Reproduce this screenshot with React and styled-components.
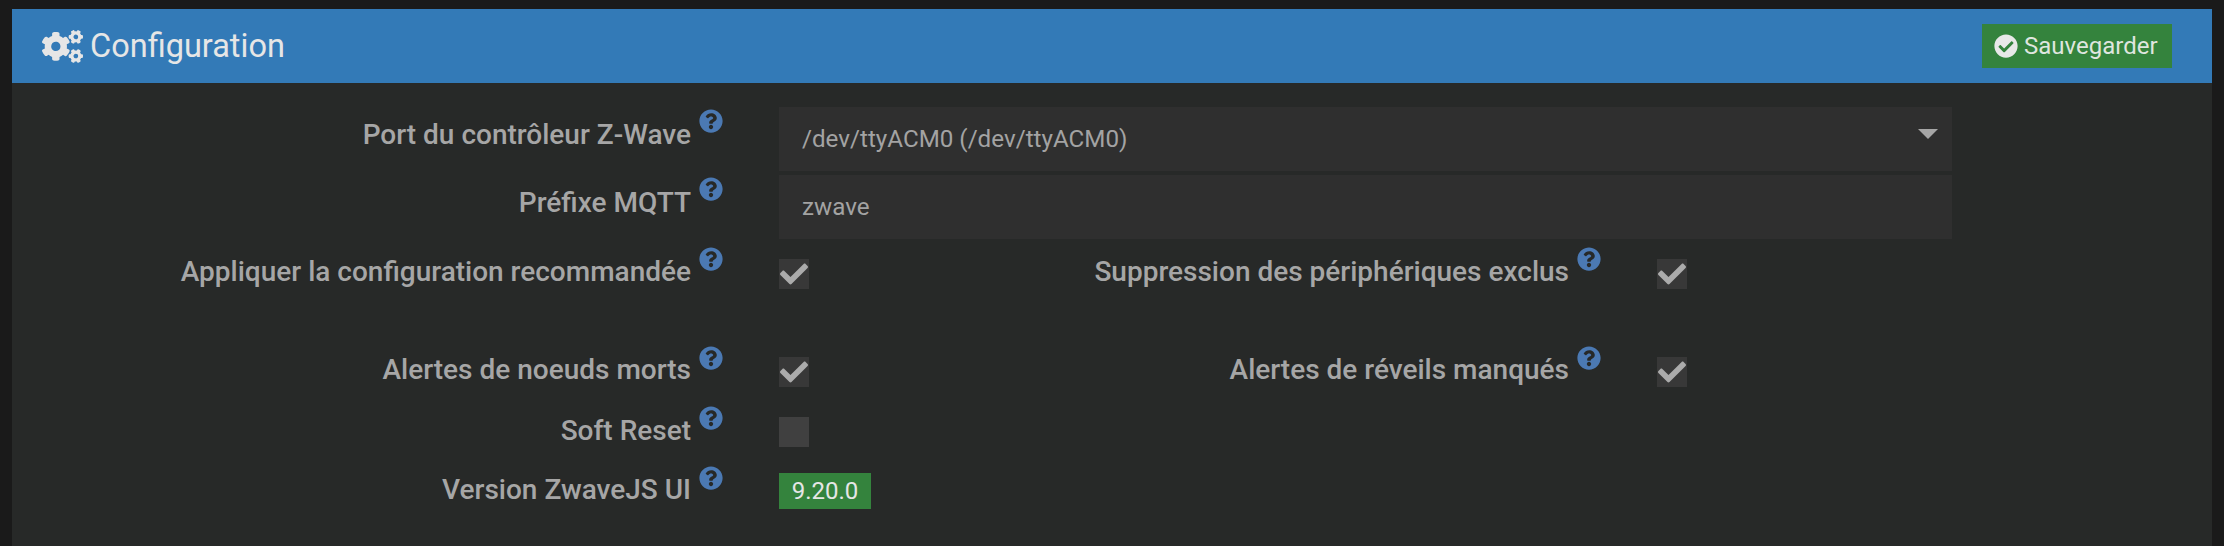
import React from 'react';
import styled, { createGlobalStyle } from 'styled-components';
import { FaCogs, FaCheckCircle, FaCheck, FaQuestionCircle } from 'react-icons/fa';

const GlobalStyle = createGlobalStyle`
  html, body {
    margin: 0;
    height: 100%;
    background: #1a1a1a;
    font-family: Roboto, "Liberation Sans", sans-serif;
  }
  * { box-sizing: border-box; }
`;

const Page = styled.div`
  height: 546px;
  padding: 9px 12px 0;
  overflow: hidden;
`;

const Panel = styled.section`
  height: 537px;
  background: #272928;
`;

const Header = styled.header`
  height: 74px;
  background: #337ab7;
  padding: 0 40px 0 30px;
  display: flex;
  align-items: center;
  justify-content: space-between;
`;

const Title = styled.h3`
  margin: 0;
  display: flex;
  align-items: center;
  gap: 7px;
  font-size: 32.5px;
  font-weight: 400;
  color: #e6e6e6;
  svg { width: 41px; height: 33px; }
`;

const SaveButton = styled.button`
  width: 190px;
  height: 44px;
  border: 0;
  padding: 0 0 0 12px;
  background: #34833d;
  color: #dfe6df;
  font: 400 24px Roboto, sans-serif;
  display: flex;
  align-items: center;
  gap: 6px;
  svg { width: 24px; height: 24px; color: #e8e8e8; }
`;

const Form = styled.div`
  padding-top: 24px;
`;

const Row = styled.div`
  display: flex;
  height: ${props => props.$height}px;
  margin-bottom: ${props => props.$gap || 0}px;
`;

const LabelBox = styled.label`
  width: ${props => props.$width}px;
  flex-shrink: 0;
  text-align: right;
  font-size: 28px;
  font-weight: 500;
  line-height: 32px;
  color: #a6a6a6;
  white-space: nowrap;
  padding-top: ${props => props.$top}px;
`;

const HelpIcon = styled(FaQuestionCircle)`
  flex-shrink: 0;
  width: 24px;
  height: 24px;
  margin: ${props => props.$top}px 56px 0 8px;
  color: #4b79b3;
`;

const TextBox = styled.div`
  width: 1173px;
  height: 64px;
  padding: 0 23px;
  background: #2f2f2f;
  color: #a3a3a3;
  font-size: 24.2px;
  display: flex;
  align-items: center;
  justify-content: space-between;
`;

const Caret = styled.span`
  width: 0;
  height: 0;
  margin: 0 -9px 10px 0;
  border-left: 10px solid transparent;
  border-right: 10px solid transparent;
  border-top: 10px solid #a6a6a6;
`;

const Checkbox = styled.span`
  width: 30px;
  height: 30px;
  margin-top: ${props => props.$top}px;
  flex-shrink: 0;
  background: ${props => (props.$checked ? '#383838' : '#404040')};
  color: #ababab;
  display: flex;
  align-items: center;
  justify-content: center;
  svg { width: 28px; height: 28px; }
`;

const Badge = styled.span`
  width: 92px;
  height: 36px;
  margin-top: ${props => props.$top}px;
  background: #34833d;
  color: #e6e6e6;
  font-size: 24px;
  display: flex;
  align-items: center;
  justify-content: center;
`;

const Label = ({ width, top, iconTop, children }) => (
  <>
    <LabelBox $width={width} $top={top}>{children}</LabelBox>
    <HelpIcon $top={iconTop} />
  </>
);

const Check = ({ checked = true, top }) => (
  <Checkbox $checked={checked} $top={top}>{checked && <FaCheck />}</Checkbox>
);

const App = () => (
  <Page>
    <GlobalStyle />
    <Panel>
      <Header>
        <Title><FaCogs />Configuration</Title>
        <SaveButton><FaCheckCircle />Sauvegarder</SaveButton>
      </Header>
      <Form>
        <Row $height={64} $gap={4}>
          <Label width={679} top={12} iconTop={2}>Port du contrôleur Z-Wave</Label>
          <TextBox>/dev/ttyACM0 (/dev/ttyACM0)<Caret /></TextBox>
        </Row>
        <Row $height={64} $gap={4}>
          <Label width={679} top={12} iconTop={2}>Préfixe MQTT</Label>
          <TextBox>zwave</TextBox>
        </Row>
        <Row $height={94} $gap={4}>
          <Label width={679} top={13} iconTop={4}>Appliquer la configuration recommandée</Label>
          <Check top={16} />
          <Label width={760} top={13} iconTop={4}>Suppression des périphériques exclus</Label>
          <Check top={16} />
        </Row>
        <Row $height={60}>
          <Label width={679} top={13} iconTop={5}>Alertes de noeuds morts</Label>
          <Check top={16} />
          <Label width={760} top={13} iconTop={5}>Alertes de réveils manqués</Label>
          <Check top={16} />
        </Row>
        <Row $height={56}>
          <Label width={679} top={14} iconTop={5}>Soft Reset</Label>
          <Check checked={false} top={16} />
        </Row>
        <Row $height={56}>
          <Label width={679} top={17} iconTop={9}>Version ZwaveJS UI</Label>
          <Badge $top={16}>9.20.0</Badge>
        </Row>
      </Form>
    </Panel>
  </Page>
);

export default App;
